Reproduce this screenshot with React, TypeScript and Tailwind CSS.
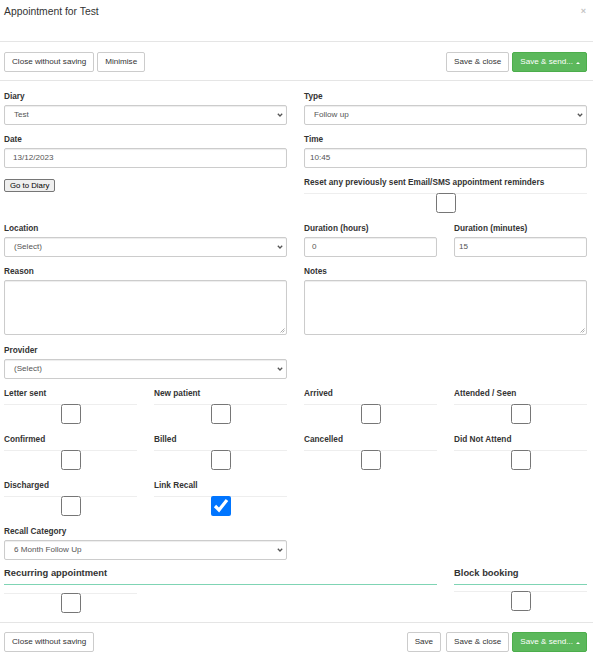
import React from "react";

const Label = ({ children, className = "" }: { children?: React.ReactNode; className?: string }) => (
  <div className={`text-[8.25px] font-bold leading-[11px] text-[#333] whitespace-nowrap ${className}`}>{children}</div>
);

const Chevron = () => (
  <svg width="6" height="4" viewBox="0 0 6 4" className="shrink-0">
    <path d="M0.8 0.8 L3 3 L5.2 0.8" fill="none" stroke="#555" strokeWidth="1.3" />
  </svg>
);

const Select = ({ value, className = "" }: { value: string; className?: string }) => (
  <div
    className={`h-[20px] border border-[#ccc] rounded-[2px] bg-white flex items-center justify-between pl-[9px] pr-[3px] text-[8.1px] text-[#555] shadow-[inset_0_1px_1px_rgba(0,0,0,0.075)] ${className}`}
  >
    <span>{value}</span>
    <Chevron />
  </div>
);

const Input = ({ value, pl }: { value: string; pl: string }) => (
  <div
    className={`h-[20px] border border-[#ccc] rounded-[2px] bg-white flex items-center ${pl} text-[8.1px] text-[#555] shadow-[inset_0_1px_1px_rgba(0,0,0,0.075)]`}
  >
    {value}
  </div>
);

const TextArea = () => (
  <div className="relative h-[55px] border border-[#ccc] rounded-[2px] bg-white shadow-[inset_0_1px_1px_rgba(0,0,0,0.075)]">
    <svg width="5" height="5" viewBox="0 0 5 5" className="absolute right-[1px] bottom-[1px]">
      <path d="M4.5 0.5 L0.5 4.5 M4.5 2.5 L2.5 4.5" stroke="#999" strokeWidth="0.8" />
    </svg>
  </div>
);

const CheckCell = ({ checked = false, className = "" }: { checked?: boolean; className?: string }) => (
  <div className={`h-[21px] border-t border-[#eee] flex justify-center ${className}`}>
    <input type="checkbox" defaultChecked={checked} className="w-[20px] h-[20px] m-0 -mt-px" />
  </div>
);

const CheckField = ({ label, checked = false }: { label: string; checked?: boolean }) => (
  <div className="mb-[9px]">
    <Label className="mb-[5px]">{label}</Label>
    <CheckCell checked={checked} />
  </div>
);

const Field = ({ label, children, mb = "mb-[9px]", className = "" }: { label: string; children: React.ReactNode; mb?: string; className?: string }) => (
  <div className={`${mb} ${className}`}>
    <Label className="mb-[3px]">{label}</Label>
    {children}
  </div>
);

const Btn = ({ children, className = "" }: { children: React.ReactNode; className?: string }) => (
  <button className={`h-[20px] px-[7px] flex items-center border border-[#ccc] rounded-[2px] bg-white text-[8.1px] text-[#333] ${className}`}>
    {children}
  </button>
);

const SendBtn = () => (
  <button className="h-[20px] pl-[7px] pr-[6px] flex items-center gap-[3px] border border-[#4cae4c] rounded-[2px] bg-[#5cb85c] text-[8.1px] text-white">
    <span>Save &amp; send...</span>
    <span className="w-0 h-0 border-x-[2px] border-x-transparent border-b-[2.5px] border-b-white mt-[1px]" />
  </button>
);

export default function App() {
  return (
    <div className="w-[593px] bg-white font-['Liberation_Sans',Arial,sans-serif] text-[#333]">
      {/* Header */}
      <div className="h-[42px] border-b border-[#e5e5e5] flex justify-between items-start pl-[4px] pr-[7px] pt-[5px]">
        <div className="text-[10.35px] leading-[14px] text-[#333]">Appointment for Test</div>
        <div className="text-[9px] font-bold leading-[12px] text-[#c4c4c4]">×</div>
      </div>

      {/* Toolbar */}
      <div className="border-b border-[#e5e5e5] flex justify-between pl-[4px] pr-[6px] pt-[10px] pb-[8px]">
        <div className="flex gap-[3px]">
          <Btn>Close without saving</Btn>
          <Btn>Minimise</Btn>
        </div>
        <div className="flex gap-[3px]">
          <Btn>Save &amp; close</Btn>
          <SendBtn />
        </div>
      </div>

      {/* Body */}
      <div className="pl-[4px] pr-[6px] pt-[10px] pb-[8px] grid grid-cols-4 gap-x-[17px] items-start">
        <Field label="Diary" className="col-span-2">
          <Select value="Test" />
        </Field>
        <Field label="Type" className="col-span-2">
          <Select value="Follow up" />
        </Field>

        <Field label="Date" className="col-span-2">
          <Input value="13/12/2023" pl="pl-[8px]" />
        </Field>
        <Field label="Time" className="col-span-2">
          <Input value="10:45" pl="pl-[5px]" />
        </Field>

        <div className="col-span-2 pt-[2px]">
          <button className="h-[13px] px-[5px] flex items-center border border-[#767676] rounded-[2px] bg-[#efefef] text-[7.8px] text-black">
            Go to Diary
          </button>
        </div>
        <div className="col-span-2 mb-[9px]">
          <Label className="mb-[5px]">Reset any previously sent Email/SMS appointment reminders</Label>
          <CheckCell />
        </div>

        <Field label="Location" className="col-span-2">
          <Select value="(Select)" />
        </Field>
        <Field label="Duration (hours)">
          <Input value="0" pl="pl-[7px]" />
        </Field>
        <Field label="Duration (minutes)">
          <Input value="15" pl="pl-[4px]" />
        </Field>

        <Field label="Reason" className="col-span-2" mb="mb-[10px]">
          <TextArea />
        </Field>
        <Field label="Notes" className="col-span-2" mb="mb-[10px]">
          <TextArea />
        </Field>

        <Field label="Provider" className="col-span-2">
          <Select value="(Select)" />
        </Field>
        <div className="col-span-2" />

        <CheckField label="Letter sent" />
        <CheckField label="New patient" />
        <CheckField label="Arrived" />
        <CheckField label="Attended / Seen" />

        <CheckField label="Confirmed" />
        <CheckField label="Billed" />
        <CheckField label="Cancelled" />
        <CheckField label="Did Not Attend" />

        <CheckField label="Discharged" />
        <CheckField label="Link Recall" checked />
        <div className="col-span-2" />

        <Field label="Recall Category" className="col-span-2" mb="mb-[6px]">
          <Select value="6 Month Follow Up" />
        </Field>
        <div className="col-span-2" />

        <div className="col-span-3">
          <div className="text-[9.4px] font-bold leading-[14px] pb-[4px] border-b border-[#7fd4b4] text-[#333]">
            Recurring appointment
          </div>
          <div className="grid grid-cols-3 gap-x-[17px] mt-[8px]">
            <CheckCell />
          </div>
        </div>
        <div>
          <div className="text-[9.4px] font-bold leading-[14px] pb-[4px] border-b border-[#7fd4b4] text-[#333]">
            Block booking
          </div>
          <CheckCell className="mt-[6px]" />
        </div>
      </div>

      {/* Footer */}
      <div className="border-t border-[#e5e5e5] flex justify-between pl-[4px] pr-[6px] pt-[9px] pb-[10px]">
        <Btn>Close without saving</Btn>
        <div className="flex gap-[3px]">
          <Btn className="mr-[2px]">Save</Btn>
          <Btn>Save &amp; close</Btn>
          <SendBtn />
        </div>
      </div>
    </div>
  );
}
